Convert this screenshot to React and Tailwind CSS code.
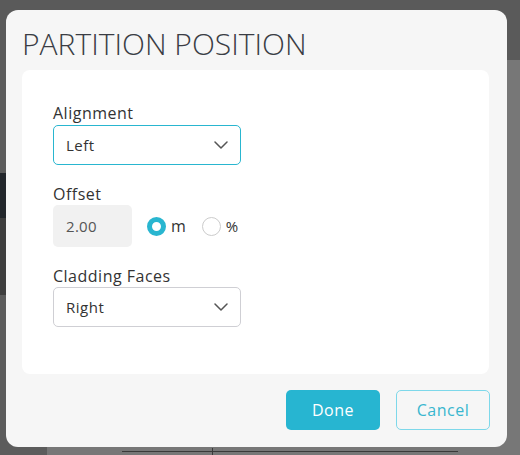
import React from "react";

function Chevron() {
  return (
    <svg width="14" height="8" viewBox="0 0 14 8" fill="none" className="shrink-0">
      <path d="M1 1l6 6 6-6" stroke="#555" strokeWidth="1.5" strokeLinecap="round" strokeLinejoin="round" />
    </svg>
  );
}

function Select({ value, active }) {
  return (
    <div
      className={`w-[188px] h-10 rounded-[5px] bg-white flex items-center justify-between pl-[12px] pr-[12px] border ${
        active ? "border-[#29b6d0]" : "border-[#cfcfd4]"
      }`}
    >
      <span className="text-[15px] tracking-[0.5px] text-[#333]">{value}</span>
      <Chevron />
    </div>
  );
}

export default function App() {
  return (
    <div
      className="relative w-[520px] h-[455px] overflow-hidden bg-[#777777]"
      style={{ fontFamily: "'Open Sans', 'Liberation Sans', sans-serif" }}
    >
      {/* dimmed app behind the dialog */}
      <div className="absolute left-0 top-0 w-full h-[60px] bg-[#5a5a5a]" />
      <div className="absolute left-0 top-[60px] w-[47px] h-[395px] bg-[#5c5c5c]" />
      <div className="absolute left-0 top-[173px] w-[6px] h-[45px] bg-[#23272c]" />
      <div className="absolute left-0 top-[218px] w-[6px] h-[77px] bg-[#3e3e3e]" />
      <div className="absolute left-[122px] top-[451px] w-[336px] h-px bg-[#3a3a3a]" />
      <div className="absolute left-[212px] top-[448px] w-px h-[7px] bg-[#3a3a3a]" />

      {/* dialog */}
      <div className="absolute left-[6px] top-[10px] w-[501px] h-[437px] rounded-[12px] bg-[#f6f6f6] px-4 pt-[15px] flex flex-col">
        <h1 className="text-[30px] leading-[38px] font-light text-[#3a3d44]">PARTITION POSITION</h1>
        <div className="mt-[7px] w-[467px] h-[304px] rounded-[8px] bg-white pl-[31px] pt-[33px] flex flex-col">
          <label className="text-[16px] leading-5 tracking-[0.5px] font-medium text-[#333]">Alignment</label>
          <div className="mt-[2px]">
            <Select value="Left" active />
          </div>

          <label className="mt-[19px] text-[16px] leading-5 tracking-[0.5px] font-medium text-[#333]">Offset</label>
          <div className="mt-[1px] flex items-center">
            <div className="w-[79px] h-[42px] rounded-[5px] bg-[#f1f1f1] flex items-center pl-[13px] text-[15px] tracking-[0.3px] text-[#555]">
              2.00
            </div>
            <div className="ml-[15px] flex items-center gap-[5px]">
              <span className="w-[19px] h-[19px] rounded-full border-[5px] border-[#29b6d0] bg-white" />
              <span className="text-[16px] text-[#333]">m</span>
            </div>
            <div className="ml-[16px] flex items-center gap-[5px]">
              <span className="w-[19px] h-[19px] rounded-full border border-[#cccccc] bg-white" />
              <span className="text-[15px] text-[#333]">%</span>
            </div>
          </div>

          <label className="mt-[19px] text-[16px] leading-5 tracking-[0.5px] font-medium text-[#333]">
            Cladding Faces
          </label>
          <div className="mt-[1px]">
            <Select value="Right" />
          </div>
        </div>

        <div className="mt-4 flex justify-end gap-4 pr-[1px]">
          <button className="w-[94px] h-10 rounded-[5px] bg-[#27b5d1] text-white text-[16px] tracking-[0.5px]">
            Done
          </button>
          <button className="w-[94px] h-10 rounded-[5px] border border-[#7dd8ea] text-[#39b6cf] text-[16px] tracking-[0.5px]">
            Cancel
          </button>
        </div>
      </div>
    </div>
  );
}
